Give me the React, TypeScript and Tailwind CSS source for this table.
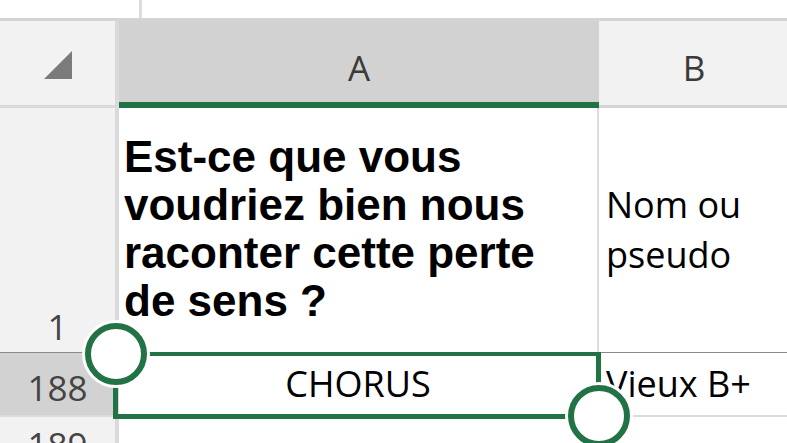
import React from "react";

export default function App() {
  return (
    <div className="relative w-[787px] h-[443px] overflow-hidden bg-white font-['Open_Sans',sans-serif]">
      {/* top strip */}
      <div className="flex h-[18px]">
        <div className="w-[139px]" />
        <div className="w-[3px] bg-[#dcdcdc]" />
      </div>

      {/* column header row */}
      <div className="flex h-[90px] border-t-[3px] border-[#d4d4d4]">
        <div className="relative w-[115px] shrink-0 bg-[#f2f2f2] border-b-[3px] border-[#dadada]">
          <svg className="absolute left-[44px] top-[30px]" width="28" height="28" viewBox="0 0 28 28">
            <polygon points="28,0 28,28 0,28" fill="#7b7b7b" />
          </svg>
        </div>
        <div className="w-[4px] shrink-0 bg-[#dadada]" />
        <div className="w-[480px] shrink-0 bg-[#d2d2d2] border-b-[6px] border-[#217346] flex items-start justify-center pt-[29px] text-[35px] leading-[35px] text-[#3a3a3a]">
          A
        </div>
        <div className="flex-1 bg-[#f2f2f2] border-b-[3px] border-[#d4d4d4] flex items-start justify-center pt-[29px] pl-[2px] text-[35px] leading-[35px] text-[#3a3a3a]">
          B
        </div>
      </div>

      {/* row 1 */}
      <div className="flex h-[244px]">
        <div className="w-[115px] shrink-0 bg-[#f2f2f2] flex items-end justify-center pb-[8px] text-[35px] leading-[35px] text-[#444]">
          1
        </div>
        <div className="w-[4px] shrink-0 bg-[#dadada]" />
        <div className="w-[480px] shrink-0 border-r-[2px] border-[#dcdcdc] flex items-center pl-[5px] pb-[2px] font-['Liberation_Sans',Arial,sans-serif] font-bold text-[44px] leading-[48px] text-black">
          <div>
            Est-ce que vous
            <br />
            voudriez bien nous
            <br />
            raconter cette perte
            <br />
            de sens ?
          </div>
        </div>
        <div className="flex-1 flex items-center pl-[7px] text-[36px] leading-[50px] text-black">
          <div>
            Nom ou
            <br />
            pseudo
          </div>
        </div>
      </div>

      {/* frozen divider */}
      <div className="h-[1px] bg-[#8a8a8a]" />

      {/* row 188 */}
      <div className="flex h-[64px] border-b-[2px] border-[#dcdcdc]">
        <div className="w-[115px] shrink-0 bg-[#d2d2d2] flex items-start justify-center pt-[17px] text-[35px] leading-[35px] text-[#444]">
          188
        </div>
        <div className="w-[4px] shrink-0 bg-[#dadada]" />
        <div className="w-[480px] shrink-0 border-r-[2px] border-[#dcdcdc] flex items-start justify-center pt-[13px] text-[36px] leading-[36px] text-black">
          CHORUS
        </div>
        <div className="flex-1 flex items-start pt-[13px] pl-[7px] text-[36px] leading-[36px] text-black">
          Vieux B+
        </div>
      </div>

      {/* row 189 */}
      <div className="flex h-[60px]">
        <div className="w-[115px] shrink-0 bg-[#f2f2f2] flex items-start justify-center pt-[10px] text-[35px] leading-[35px] text-[#444]">
          189
        </div>
        <div className="w-[4px] shrink-0 bg-[#dadada]" />
        <div className="w-[480px] shrink-0 border-r-[2px] border-[#dcdcdc]" />
        <div className="flex-1" />
      </div>

      {/* selection overlay */}
      <div className="absolute left-[113px] top-[352px] w-[488px] h-[67px] border-[5px] border-t-[4px] border-[#217346]" />

      {/* handles */}
      <div className="absolute left-[85px] top-[323px] w-[62px] h-[62px] rounded-full bg-white border-[6px] border-[#217346] ring-[3px] ring-white" />
      <div className="absolute left-[568px] top-[385px] w-[62px] h-[62px] rounded-full bg-white border-[6px] border-[#217346] ring-[3px] ring-white" />
    </div>
  );
}
